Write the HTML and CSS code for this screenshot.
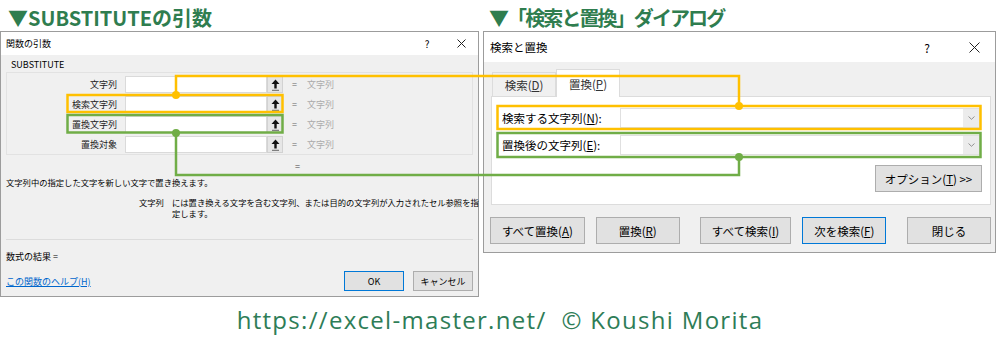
FILE: index.html
```html
<!DOCTYPE html>
<html lang="ja">
  <head>
    <meta charset="UTF-8" />
    <meta name="viewport" content="width=device-width, initial-scale=1.0" />
    <title>SUBSTITUTEの引数 と 検索と置換</title>
    <link rel="stylesheet" href="styles.css">
  </head>
  <body>
    <div class="page">
      <div class="cols">
        <!-- 関数の引数 -->
        <section class="col col-left">
          <h2>▼SUBSTITUTEの引数</h2>
          <div class="dlg fx">
            <div class="titlebar">
              <span class="tb-title">関数の引数</span>
              <span class="tb-help">?</span>
              <span class="tb-close">
                <svg width="9" height="9" viewBox="0 0 9 9"><path d="M0.5 0.5L8.5 8.5M8.5 0.5L0.5 8.5" stroke="#222" stroke-width="1"/></svg>
              </span>
            </div>
            <div class="fx-body">
              <div class="grp-name">SUBSTITUTE</div>
              <div class="grp">
                <div class="arg">
                  <span class="arg-name">文字列</span>
                  <span class="arg-input"></span>
                  <span class="ref-btn"><svg width="9" height="12" viewBox="0 0 9 12"><path d="M4.5 0.5L8.5 5H5.7V9.5H3.3V5H0.5Z" fill="#111"/><rect x="1" y="10.8" width="7" height="1" fill="#666"/></svg></span>
                  <span class="arg-eq">=</span>
                  <span class="arg-val">文字列</span>
                </div>
                <div class="arg">
                  <span class="arg-name">検索文字列</span>
                  <span class="arg-input"></span>
                  <span class="ref-btn"><svg width="9" height="12" viewBox="0 0 9 12"><path d="M4.5 0.5L8.5 5H5.7V9.5H3.3V5H0.5Z" fill="#111"/><rect x="1" y="10.8" width="7" height="1" fill="#666"/></svg></span>
                  <span class="arg-eq">=</span>
                  <span class="arg-val">文字列</span>
                </div>
                <div class="arg">
                  <span class="arg-name">置換文字列</span>
                  <span class="arg-input"></span>
                  <span class="ref-btn"><svg width="9" height="12" viewBox="0 0 9 12"><path d="M4.5 0.5L8.5 5H5.7V9.5H3.3V5H0.5Z" fill="#111"/><rect x="1" y="10.8" width="7" height="1" fill="#666"/></svg></span>
                  <span class="arg-eq">=</span>
                  <span class="arg-val">文字列</span>
                </div>
                <div class="arg">
                  <span class="arg-name">置換対象</span>
                  <span class="arg-input"></span>
                  <span class="ref-btn"><svg width="9" height="12" viewBox="0 0 9 12"><path d="M4.5 0.5L8.5 5H5.7V9.5H3.3V5H0.5Z" fill="#111"/><rect x="1" y="10.8" width="7" height="1" fill="#666"/></svg></span>
                  <span class="arg-eq">=</span>
                  <span class="arg-val">文字列</span>
                </div>
              </div>
              <div class="result-eq">=</div>
              <p class="fx-desc">文字列中の指定した文字を新しい文字で置き換えます。</p>
              <div class="arg-help">
                <span class="arg-help-name">文字列</span>
                <span class="arg-help-text">には置き換える文字を含む文字列、または目的の文字列が入力されたセル参照を指定します。</span>
              </div>
              <div class="sep"></div>
              <div class="formula">数式の結果 =</div>
              <div class="fx-foot">
                <a class="help-link" href="#">この関数のヘルプ(H)</a>
                <button class="btn btn-default fx-ok">OK</button>
                <button class="btn fx-cancel">キャンセル</button>
              </div>
            </div>
          </div>
        </section>

        <!-- 検索と置換 -->
        <section class="col col-right">
          <h2>▼「検索と置換」ダイアログ</h2>
          <div class="dlg fr">
            <div class="titlebar">
              <span class="tb-title">検索と置換</span>
              <span class="tb-help">?</span>
              <span class="tb-close">
                <svg width="11" height="11" viewBox="0 0 11 11"><path d="M0.5 0.5L10.5 10.5M10.5 0.5L0.5 10.5" stroke="#222" stroke-width="1"/></svg>
              </span>
            </div>
            <div class="fr-body">
              <div class="tabs">
                <span class="tab">検索(<u>D</u>)</span>
                <span class="tab tab-active">置換(<u>P</u>)</span>
              </div>
              <div class="panel">
                <div class="fr-row">
                  <span class="fr-label">検索する文字列(<u>N</u>):</span>
                  <span class="combo"><span class="combo-arrow"><svg width="7" height="4" viewBox="0 0 7 4"><path d="M0.5 0.5L3.5 3.3L6.5 0.5" fill="none" stroke="#888" stroke-width="0.9"/></svg></span></span>
                </div>
                <div class="fr-row">
                  <span class="fr-label">置換後の文字列(<u>E</u>):</span>
                  <span class="combo"><span class="combo-arrow"><svg width="7" height="4" viewBox="0 0 7 4"><path d="M0.5 0.5L3.5 3.3L6.5 0.5" fill="none" stroke="#888" stroke-width="0.9"/></svg></span></span>
                </div>
                <div class="opt-row">
                  <button class="btn opt-btn">オプション(<u>T</u>) &gt;&gt;</button>
                </div>
              </div>
              <div class="fr-btns">
                <button class="btn b-all-rep">すべて置換(<u>A</u>)</button>
                <button class="btn b-rep">置換(<u>R</u>)</button>
                <button class="btn b-all-find">すべて検索(<u>I</u>)</button>
                <button class="btn btn-default b-next">次を検索(<u>F</u>)</button>
                <button class="btn b-close">閉じる</button>
              </div>
            </div>
          </div>
        </section>
      </div>

      <p class="credit">https://excel-master.net/&nbsp;&nbsp;© Koushi Morita</p>

      <!-- highlight boxes and connectors drawn over both dialogs -->
      <svg class="marks" width="1000" height="343" viewBox="0 0 1000 343">
        <g fill="none" stroke="#ffc000" stroke-width="2.5">
          <rect x="67.5" y="95" width="215" height="17"/>
          <path d="M176 95V76H739V106"/>
          <rect x="497.5" y="106" width="483" height="23"/>
        </g>
        <g fill="#ffc000">
          <circle cx="176" cy="95" r="4"/>
          <circle cx="739" cy="106" r="4"/>
        </g>
        <g fill="none" stroke="#70ad47" stroke-width="2.5">
          <rect x="67.5" y="115" width="215" height="17.5"/>
          <path d="M176 133V175H739V157"/>
          <rect x="497.5" y="133" width="483" height="24"/>
        </g>
        <g fill="#70ad47">
          <circle cx="176" cy="133" r="4"/>
          <circle cx="739" cy="157" r="4"/>
        </g>
      </svg>
    </div>
  </body>
</html>
```

FILE: styles.css
```css
/* Reset */
* {
  margin: 0;
  padding: 0;
  box-sizing: border-box;
}

body {
  background: #ffffff;
  font-family: "Noto Sans CJK JP", "Noto Sans", sans-serif;
  color: #000;
}

.page {
  position: relative;
  width: 1000px;
  height: 343px;
  overflow: hidden;
}

.cols {
  display: flex;
  gap: 4px;
}

.col-left {
  width: 479px;
}

.col-right {
  width: 513px;
}

/* Green headings */
.col h2 {
  height: 31px;
  padding: 4px 0 0 8px;
  line-height: 27px;
  font-size: 20px;
  font-weight: bold;
  color: #2f7d4f;
  white-space: nowrap;
}

.col-right h2 {
  padding-left: 6px;
  letter-spacing: -1.9px;
}

/* Dialog frame */
.dlg {
  border: 1px solid #9c9c9c;
  background: #f0f0f0;
}

.titlebar {
  display: flex;
  align-items: center;
  background: #ffffff;
}

.tb-title {
  flex: 1;
}

.tb-help,
.tb-close {
  display: flex;
  align-items: center;
  justify-content: center;
}

.btn {
  display: flex;
  align-items: center;
  justify-content: center;
  background: #e1e1e1;
  border: 1px solid #adadad;
  font-family: inherit;
  color: #000;
}

.btn-default {
  border-color: #0078d7;
}

u {
  text-decoration: underline;
  text-underline-offset: 1px;
}

/* ---------- 関数の引数 ---------- */
.fx {
  height: 266px;
  font-size: 9px;
}

.fx .titlebar {
  height: 23px;
  padding-left: 5px;
}

.fx .tb-help {
  width: 34px;
  font-size: 10px;
}

.fx .tb-close {
  width: 34px;
}

.fx-body {
  padding: 3px 5px 0;
}

.grp-name {
  padding-left: 5px;
  line-height: 14px;
}

.grp {
  border: 1px solid #e2e2e2;
  padding: 3px 0 1px;
}

.arg {
  display: flex;
  align-items: center;
  height: 17px;
  margin-bottom: 3px;
}

.arg:last-child {
  margin-bottom: 0;
}

.arg-name {
  width: 110px;
  text-align: right;
  color: #222;
}

.arg-input {
  width: 142px;
  height: 17px;
  margin-left: 8px;
  background: #ffffff;
  border: 1px solid #dadada;
}

.ref-btn {
  display: flex;
  align-items: center;
  justify-content: center;
  width: 16px;
  height: 17px;
  background: #e6e6e6;
  border: 1px solid #d2d2d2;
}

.arg-eq {
  margin-left: 9px;
  color: #666;
}

.arg-val {
  margin-left: 10px;
  color: #ababab;
}

.result-eq {
  margin: 6px 0 0 289px;
  line-height: 12px;
  color: #444;
}

.fx-desc {
  margin-top: 3px;
  line-height: 12px;
  font-size: 8.3px;
}

.arg-help {
  display: flex;
  margin-top: 9px;
  padding-left: 133px;
  line-height: 11px;
  font-size: 8.3px;
}

.arg-help-name {
  width: 33px;
  flex: none;
}

.arg-help-text {
  flex: none;
  width: 312px;
}

.sep {
  margin-top: 20px;
  border-top: 1px solid #dcdcdc;
}

.formula {
  margin-top: 11px;
  line-height: 12px;
}

.fx-foot {
  display: flex;
  align-items: center;
  height: 20px;
  margin-top: 8px;
}

.help-link {
  flex: 1;
  color: #0066cc;
  text-decoration: underline;
}

.fx-ok,
.fx-cancel {
  width: 60px;
  height: 20px;
  font-size: 9px;
}

.fx-ok {
  margin-right: 9px;
}

/* ---------- 検索と置換 ---------- */
.fr {
  height: 222px;
  font-size: 11.5px;
}

.fr .titlebar {
  height: 30px;
  padding-left: 6px;
}

.fr .tb-help {
  width: 52px;
  font-size: 12px;
}

.fr .tb-close {
  width: 42px;
}

.fr-body {
  padding: 7px 4px 0 7px;
}

.tabs {
  display: flex;
  align-items: flex-end;
  height: 27px;
  padding-left: 1px;
}

.tab {
  display: flex;
  align-items: center;
  justify-content: center;
  width: 64px;
  height: 24px;
  border: 1px solid #dcdcdc;
  border-bottom: none;
  color: #333;
}

.tab-active {
  position: relative;
  height: 28px;
  margin-bottom: -1px;
  background: #ffffff;
}

.panel {
  height: 109px;
  padding-top: 9px;
  background: #ffffff;
  border: 1px solid #dcdcdc;
}

.fr-row {
  display: flex;
  align-items: center;
  height: 24px;
  margin: 0 9px 3px 5px;
  padding: 0 1px 0 5px;
}

.fr-label {
  width: 118px;
  flex: none;
  white-space: nowrap;
}

.combo {
  flex: 1;
  display: flex;
  justify-content: flex-end;
  height: 20px;
  background: #ffffff;
  border: 1px solid #e0e0e0;
}

.combo-arrow {
  display: flex;
  align-items: center;
  justify-content: center;
  width: 16px;
  background: #ececec;
}

.opt-row {
  display: flex;
  justify-content: flex-end;
  margin-top: 8px;
  padding-right: 8px;
}

.opt-btn {
  width: 107px;
  height: 27px;
  font-size: 11.5px;
}

.fr-btns {
  display: flex;
  margin: 12px 0 0 -1px;
}

.fr-btns .btn {
  height: 27px;
  font-size: 11.5px;
}

.b-all-rep {
  width: 95px;
}

.b-rep {
  width: 84px;
  margin-left: 11px;
}

.b-all-find {
  width: 92px;
  margin-left: 20px;
}

.b-next {
  width: 84px;
  margin-left: 11px;
}

.b-close {
  width: 84px;
  margin-left: 21px;
}

/* Footer credit */
.credit {
  height: 46px;
  line-height: 46px;
  text-align: center;
  font-family: "Open Sans", "Noto Sans", sans-serif;
  font-size: 24px;
  letter-spacing: 1.3px;
  color: #2e7d57;
}

/* Overlay with highlight boxes and connector lines */
.marks {
  position: absolute;
  top: 0;
  left: 0;
  pointer-events: none;
}
```
